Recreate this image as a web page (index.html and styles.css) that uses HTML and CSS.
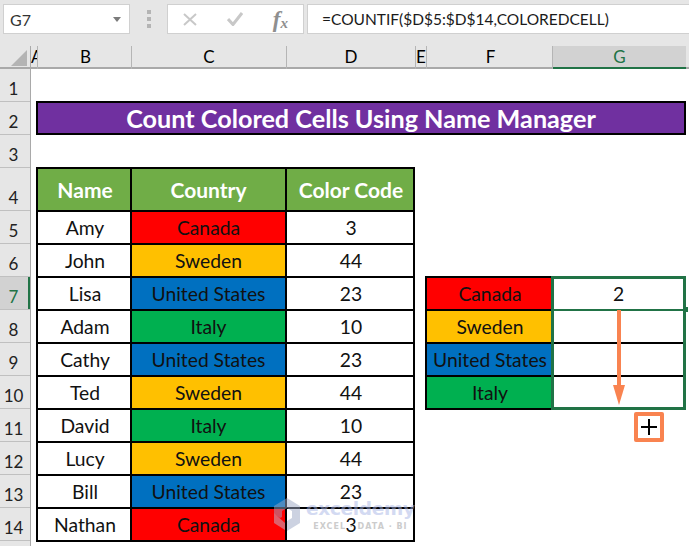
FILE: index.html
```html
<!DOCTYPE html>
<html lang="en">
<head>
<meta charset="utf-8">
<title>Count Colored Cells Using Name Manager</title>
<link rel="stylesheet" href="styles.css">
</head>
<body>
<div class="toolbar">
  <div class="namebox"><span>G7</span>
    <svg class="caret" width="8" height="5" viewBox="0 0 8 5"><path d="M0 0h8L4 5z" fill="#7b7b7b"/></svg>
  </div>
  <div class="grip"><i></i><i></i><i></i></div>
  <div class="fxbox">
    <svg width="14" height="13" viewBox="0 0 14 13"><path d="M1 1l12 11M13 1L1 12" stroke="#c8c8c8" stroke-width="2" fill="none"/></svg>
    <svg width="16" height="14" viewBox="0 0 16 14"><path d="M1 7l5 5.500L15 1" stroke="#c8c8c8" stroke-width="3" fill="none"/></svg>
    <span class="fx">f<sub>x</sub></span>
  </div>
  <div class="formula">=COUNTIF($D$5:$D$14,COLOREDCELL)</div>
</div>
<div class="sheet">
  <div class="corner"><svg width="16" height="16" viewBox="0 0 16 16"><path d="M16 0v16H0z" fill="#b4b4b4"/></svg></div>
  <div class="colheads">
    <div class="ch ca">A</div><div class="ch cb">B</div><div class="ch cc">C</div><div class="ch cd">D</div><div class="ch ce">E</div><div class="ch cf">F</div><div class="ch cg sel">G</div>
  </div>
  <div class="rowheads">
    <div class="rh">1</div><div class="rh">2</div><div class="rh">3</div><div class="rh tall">4</div><div class="rh">5</div><div class="rh">6</div><div class="rh sel">7</div><div class="rh">8</div><div class="rh">9</div><div class="rh">10</div><div class="rh">11</div><div class="rh">12</div><div class="rh">13</div><div class="rh">14</div>
  </div>
  <div class="cells">
    <div class="title">Count Colored Cells Using Name Manager</div>

    <div class="c head r4 b">Name</div><div class="c head r4 k">Country</div><div class="c head r4 d">Color Code</div>
    <div class="c r5 b">Amy</div><div class="c r5 k red">Canada</div><div class="c r5 d">3</div>
    <div class="c r6 b">John</div><div class="c r6 k amber">Sweden</div><div class="c r6 d">44</div>
    <div class="c r7 b">Lisa</div><div class="c r7 k blue">United States</div><div class="c r7 d">23</div>
    <div class="c r8 b">Adam</div><div class="c r8 k green">Italy</div><div class="c r8 d">10</div>
    <div class="c r9 b">Cathy</div><div class="c r9 k blue">United States</div><div class="c r9 d">23</div>
    <div class="c r10 b">Ted</div><div class="c r10 k amber">Sweden</div><div class="c r10 d">44</div>
    <div class="c r11 b">David</div><div class="c r11 k green">Italy</div><div class="c r11 d">10</div>
    <div class="c r12 b">Lucy</div><div class="c r12 k amber">Sweden</div><div class="c r12 d">44</div>
    <div class="c r13 b">Bill</div><div class="c r13 k blue">United States</div><div class="c r13 d">23</div>
    <div class="c r14 b">Nathan</div><div class="c r14 k red">Canada</div><div class="c r14 d">3</div>

    <div class="c r7 f red">Canada</div><div class="c r7 g">2</div>
    <div class="c r8 f amber">Sweden</div><div class="c r8 g"></div>
    <div class="c r9 f blue">United States</div><div class="c r9 g"></div>
    <div class="c r10 f green">Italy</div><div class="c r10 g"></div>

    <div class="selection"></div>
    <div class="active"></div>
    <div class="handle"></div>
    <svg class="arrow" width="14" height="96" viewBox="0 0 14 96"><path d="M7 0v78" stroke="#f98350" stroke-width="4" fill="none"/><path d="M1 75h12L7 95z" fill="#f98350"/></svg>
    <div class="fill"><svg width="16" height="16" viewBox="0 0 16 16"><path d="M8 0v16M0 8h16" stroke="#000" stroke-width="2" fill="none"/></svg></div>
    <div class="mark">
      <svg width="28" height="35" viewBox="0 0 28 35"><path d="M14 1l13 8v17l-13 8V24l5-3v-7l-5-3-5 3v6l-2 1-6-4V9z" fill="#9aa6c4"/><path d="M1 16v10l11 7v-7z" fill="#b9c2d8"/></svg>
      <div class="marktext"><div class="markname">exceldemy</div><div class="marksub">EXCEL · DATA · BI</div></div>
    </div>
  </div>
</div>
</body>
</html>
```
FILE: styles.css
```css
* { box-sizing: border-box; }
html, body { margin: 0; padding: 0; }
body {
  width: 689px;
  height: 546px;
  overflow: hidden;
  background: #fff;
  font-family: "Lato", "Open Sans", sans-serif;
  color: #000;
}
.toolbar {
  height: 46px;
  background: #e6e6e6;
  display: flex;
  align-items: flex-start;
  padding-top: 4px;
}
.namebox {
  width: 127px;
  height: 30px;
  margin-left: 3px;
  background: #fff;
  border: 1px solid #d0d0d0;
  display: flex;
  align-items: center;
  justify-content: space-between;
  padding: 0 8px 0 6px;
  font-size: 16px;
  color: #333;
}
.grip {
  width: 37px;
  height: 30px;
  display: flex;
  flex-direction: column;
  align-items: center;
  justify-content: center;
  gap: 3px;
}
.grip i { width: 4px; height: 4px; background: #b4b4b4; display: block; }
.fxbox {
  width: 137px;
  height: 30px;
  background: #fff;
  border: 1px solid #d0d0d0;
  display: flex;
  align-items: center;
  justify-content: space-between;
  padding: 0 15px;
  margin-right: 3px;
}
.fx {
  font-family: "Liberation Serif", serif;
  font-style: italic;
  font-weight: 700;
  font-size: 23px;
  color: #8f8f8f;
  line-height: 1;
}
.fx sub { font-size: 15px; vertical-align: -1px; line-height: 0; }
.formula {
  flex: 1;
  height: 30px;
  background: #fff;
  border: 1px solid #d0d0d0;
  border-right: 0;
  padding-left: 14px;
  font-size: 15.5px;
  line-height: 28px;
  white-space: nowrap;
  color: #1a1a1a;
}
.sheet {
  display: grid;
  grid-template-columns: 31px 658px;
  grid-template-rows: 23px 477px;
}
.corner {
  background: #e6e6e6;
  border-right: 1px solid #a9a9a9;
  border-bottom: 2px solid #a9a9a9;
  display: flex;
  justify-content: flex-end;
  align-items: flex-end;
  padding: 0 3px 1px 0;
}
.colheads {
  display: flex;
  background: #e6e6e6;
  border-bottom: 2px solid #a9a9a9;
}
.ch {
  border-right: 1px solid #b5b5b5;
  font-size: 17px;
  line-height: 22px;
  text-align: center;
  overflow: hidden;
  height: 23px;
  flex: none;
}
.ca { width: 7px; }
.cb { width: 94px; padding-left: 2px; }
.cc { width: 155px; }
.cd { width: 129px; }
.ce { width: 11px; }
.cf { width: 126px; padding-left: 2px; }
.cg { width: 133px; }
.ch.sel {
  background: #d2d2d2;
  color: #217346;
  border-bottom: 2px solid #217346;
  border-right: 0;
}
.rowheads {
  background: #e6e6e6;
  border-right: 1px solid #a9a9a9;
  display: flex;
  flex-direction: column;
}
.rh {
  height: 33px;
  flex: none;
  border-bottom: 1px solid #c0c0c0;
  padding-right: 3px;
  font-size: 17px;
  line-height: 40px;
  text-align: center;
  color: #222;
}
.rh.tall { height: 43px; line-height: 60px; }
.rh.sel { background: #d2d2d2; color: #217346; box-shadow: inset -2px 0 0 #217346; }
.cells {
  position: relative;
  display: grid;
  grid-template-columns: 6px 94px 155px 128px 12px 126px 133px 4px;
  grid-template-rows: 33px 33px 33px 43px repeat(10, 33px) 33px;
  align-content: start;
  overflow: hidden;
}
.c {
  margin: -1px;
  border: 2px solid #000;
  background: #fff;
  display: flex;
  align-items: center;
  justify-content: center;
  font-size: 19.3px;
  color: #111;
  white-space: nowrap;
}
.title {
  grid-column: 2 / 8;
  grid-row: 2;
  margin: -1px -1px 0;
  background: #7030a0;
  border: 2px solid #000;
  color: #fff;
  font-weight: 700;
  font-size: 25.2px;
  display: flex;
  align-items: center;
  justify-content: center;
}
.head { background: #70ad47; color: #fff; font-weight: 700; font-size: 21px; }
.b { grid-column: 2; padding-left: 2px; }
.k { grid-column: 3; }
.d { grid-column: 4; padding-left: 2px; }
.f { grid-column: 6; padding-left: 2px; }
.g { grid-column: 7; }
.r4 { grid-row: 4; }
.r5 { grid-row: 5; }
.r6 { grid-row: 6; }
.r7 { grid-row: 7; }
.r8 { grid-row: 8; }
.r9 { grid-row: 9; }
.r10 { grid-row: 10; }
.r11 { grid-row: 11; }
.r12 { grid-row: 12; }
.r13 { grid-row: 13; }
.r14 { grid-row: 14; }
.red { background: #ff0000; }
.amber { background: #ffc000; }
.blue { background: #0070c0; }
.green { background: #00b050; }
.selection {
  position: absolute;
  left: 520px;
  top: 207px;
  width: 135px;
  height: 134px;
  border: 3px solid #217346;
}
.active {
  position: absolute;
  left: 522px;
  top: 240px;
  width: 132px;
  height: 2px;
  background: #217346;
}
.handle {
  position: absolute;
  left: 652px;
  top: 238px;
  width: 5px;
  height: 5px;
  background: #217346;
}
.arrow { position: absolute; left: 581px; top: 241px; }
.fill {
  position: absolute;
  left: 603px;
  top: 343px;
  width: 30px;
  height: 30px;
  border: 4px solid #f98350;
  border-radius: 2px;
  background: #fff;
  display: flex;
  align-items: center;
  justify-content: center;
}
.mark {
  position: absolute;
  left: 242px;
  top: 428px;
  display: flex;
  gap: 5px;
  opacity: .5;
  pointer-events: none;
}
.marktext { display: flex; flex-direction: column; align-items: center; }
.markname {
  font-family: "DejaVu Sans", sans-serif;
  font-weight: 700;
  font-size: 18.5px;
  line-height: 24px;
  color: #a9b6e6;
  letter-spacing: -.3px;
}
.marksub {
  font-family: "DejaVu Sans", sans-serif;
  font-weight: 700;
  font-size: 8px;
  line-height: 11px;
  color: #9a9a9a;
  letter-spacing: 1px;
}
```
